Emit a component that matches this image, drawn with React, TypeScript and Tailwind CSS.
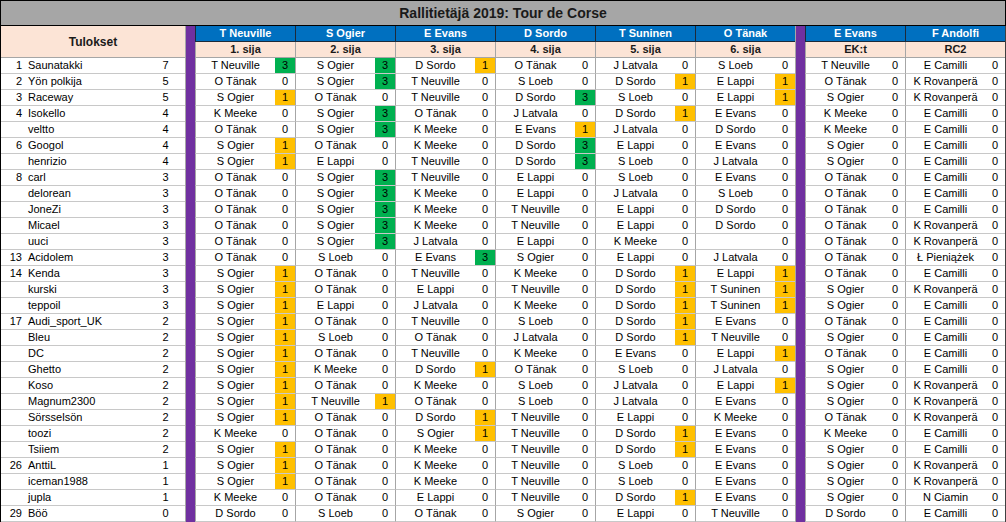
const NAMES: Record<string, string> = {
  TN: 'T Neuville',
  SO: 'S Ogier',
  EE: 'E Evans',
  DS: 'D Sordo',
  OT: 'O Tänak',
  JL: 'J Latvala',
  SL: 'S Loeb',
  EL: 'E Lappi',
  KM: 'K Meeke',
  TS: 'T Suninen',
  EC: 'E Camilli',
  KR: 'K Rovanperä',
  LP: 'Ł Pieniążek',
  NC: 'N Ciamin',
  '--': '',
}

const columns = [
  { driver: 'T Neuville', label: '1. sija' },
  { driver: 'S Ogier', label: '2. sija' },
  { driver: 'E Evans', label: '3. sija' },
  { driver: 'D Sordo', label: '4. sija' },
  { driver: 'T Suninen', label: '5. sija' },
  { driver: 'O Tänak', label: '6. sija' },
  { driver: 'E Evans', label: 'EK:t' },
  { driver: 'F Andolfi', label: 'RC2' },
]

// rank, player, points, picks (code + score)
const rows: [string, string, number, string][] = [
  ['1', 'Saunatakki', 7, 'TN3 SO3 DS1 OT0 JL0 SL0 TN0 EC0'],
  ['2', 'Yön polkija', 5, 'OT0 SO3 TN0 SL0 DS1 EL1 OT0 KR0'],
  ['3', 'Raceway', 5, 'SO1 OT0 TN0 DS3 SL0 EL1 SO0 KR0'],
  ['4', 'Isokello', 4, 'KM0 SO3 OT0 JL0 DS1 EE0 KM0 EC0'],
  ['', 'veltto', 4, 'OT0 SO3 KM0 EE1 JL0 DS0 KM0 EC0'],
  ['6', 'Googol', 4, 'SO1 OT0 KM0 DS3 EL0 EE0 SO0 EC0'],
  ['', 'henrizio', 4, 'SO1 EL0 TN0 DS3 SL0 JL0 SO0 EC0'],
  ['8', 'carl', 3, 'OT0 SO3 TN0 EL0 SL0 EE0 OT0 EC0'],
  ['', 'delorean', 3, 'OT0 SO3 KM0 EL0 JL0 SL0 OT0 EC0'],
  ['', 'JoneZi', 3, 'OT0 SO3 KM0 TN0 EL0 DS0 OT0 EC0'],
  ['', 'Micael', 3, 'OT0 SO3 KM0 TN0 EL0 DS0 OT0 KR0'],
  ['', 'uuci', 3, 'OT0 SO3 JL0 EL0 KM0 --0 OT0 KR0'],
  ['13', 'Acidolem', 3, 'OT0 SL0 EE3 SO0 EL0 JL0 OT0 LP0'],
  ['14', 'Kenda', 3, 'SO1 OT0 TN0 KM0 DS1 EL1 OT0 EC0'],
  ['', 'kurski', 3, 'SO1 OT0 EL0 TN0 DS1 TS1 SO0 KR0'],
  ['', 'teppoil', 3, 'SO1 EL0 JL0 KM0 DS1 TS1 SO0 EC0'],
  ['17', 'Audi_sport_UK', 2, 'SO1 OT0 TN0 SL0 DS1 EE0 OT0 EC0'],
  ['', 'Bleu', 2, 'SO1 SL0 OT0 JL0 DS1 TN0 SO0 EC0'],
  ['', 'DC', 2, 'SO1 OT0 TN0 KM0 EE0 EL1 OT0 EC0'],
  ['', 'Ghetto', 2, 'SO1 KM0 DS1 OT0 SL0 JL0 SO0 EC0'],
  ['', 'Koso', 2, 'SO1 OT0 KM0 SL0 JL0 EL1 SO0 KR0'],
  ['', 'Magnum2300', 2, 'SO1 TN1 OT0 SL0 JL0 EE0 SO0 KR0'],
  ['', 'Sörsselsön', 2, 'SO1 OT0 DS1 TN0 EL0 KM0 OT0 KR0'],
  ['', 'toozi', 2, 'KM0 OT0 SO1 TN0 DS1 EE0 KM0 EC0'],
  ['', 'Tsiiem', 2, 'SO1 OT0 KM0 TN0 DS1 EE0 SO0 EC0'],
  ['26', 'AnttiL', 1, 'SO1 OT0 KM0 TN0 SL0 EE0 SO0 KR0'],
  ['', 'iceman1988', 1, 'SO1 OT0 KM0 TN0 SL0 EE0 SO0 KR0'],
  ['', 'jupla', 1, 'KM0 OT0 EL0 TN0 DS1 EE0 SO0 NC0'],
  ['29', 'Böö', 0, 'DS0 SL0 OT0 SO0 EL0 TN0 DS0 EC0'],
]

function Purple() {
  return <div className="w-[10px] shrink-0 border-l border-[#a6a6a6] bg-[#7030a0]" />
}

function PickCell({ pick }: { pick: string }) {
  const name = NAMES[pick.slice(0, 2)]
  const score = Number(pick.slice(2))
  const fill = score === 3 ? 'bg-[#00b050]' : score === 1 ? 'bg-[#ffc000]' : ''
  return (
    <div className="flex w-[100px] shrink-0 border-l border-b border-l-[#a6a6a6] border-b-[#c8c8c8]">
      <div className="flex flex-1 items-center justify-center">{name}</div>
      <div className={`flex w-[20px] items-center justify-center ${fill}`}>{score}</div>
    </div>
  )
}

function HeaderCell({ driver, label }: { driver: string; label: string }) {
  return (
    <div className="flex w-[100px] shrink-0 flex-col font-bold">
      <div className="flex h-[16px] items-center justify-center border-l border-b border-[#1c2a3a] bg-[#0070c0] text-white">
        {driver}
      </div>
      <div className="flex h-[16px] items-center justify-center border-l border-b border-[#a6a6a6] bg-[#fce4d6] text-[#1a1a1a]">
        {label}
      </div>
    </div>
  )
}

export default function App() {
  return (
    <div className="w-[1006px] bg-white font-['Liberation_Sans',Arial,sans-serif] text-[11px] leading-none text-black">
      {/* Title */}
      <div className="flex h-[26px] items-center justify-center border border-black bg-[#a6a6a6] text-[14px] font-bold text-[#1a1a1a]">
        Rallitietäjä 2019: Tour de Corse
      </div>

      {/* Column headers */}
      <div className="flex h-[32px] border-x border-l-black border-r-[#404040]">
        <div className="flex w-[184px] shrink-0 items-center justify-center border-b border-[#a6a6a6] bg-[#fce4d6] text-[12px] font-bold text-[#1a1a1a]">
          Tulokset
        </div>
        <Purple />
        {columns.slice(0, 6).map((c, i) => (
          <HeaderCell key={i} driver={c.driver} label={c.label} />
        ))}
        <Purple />
        {columns.slice(6).map((c, i) => (
          <HeaderCell key={i} driver={c.driver} label={c.label} />
        ))}
      </div>

      {/* Results */}
      {rows.map(([rank, player, points, picks]) => {
        const list = picks.split(' ')
        return (
          <div key={player} className="flex h-[16px] border-x border-l-black border-r-[#404040]">
            <div className="flex w-[184px] shrink-0 border-b border-[#c8c8c8]">
              <div className="flex w-[25px] items-center justify-end pr-[4px]">{rank}</div>
              <div className="flex w-[124px] items-center pl-[2px]">{player}</div>
              <div className="flex w-[35px] items-center justify-center pr-[4px]">{points}</div>
            </div>
            <Purple />
            {list.slice(0, 6).map((p, i) => (
              <PickCell key={i} pick={p} />
            ))}
            <Purple />
            {list.slice(6).map((p, i) => (
              <PickCell key={i} pick={p} />
            ))}
          </div>
        )
      })}
    </div>
  )
}
